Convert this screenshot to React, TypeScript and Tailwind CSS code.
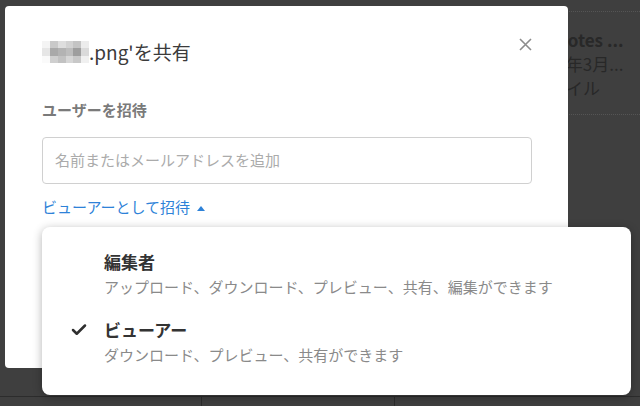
import { Check } from 'lucide-react';

const mosaic = [
  ['#f4f4f4', '#c9c9c9', '#dedede', '#d2d2d2', '#c4c4c4', '#ececec'],
  ['#e6e6e6', '#a9a9a9', '#b3b3b3', '#bdbdbd', '#9e9e9e', '#dadada'],
  ['#fafafa', '#cfcfcf', '#c2c2c2', '#d6d6d6', '#c8c8c8', '#f0f0f0'],
];

const roles = [
  { name: '編集者', desc: 'アップロード、ダウンロード、プレビュー、共有、編集ができます', checked: false },
  { name: 'ビューアー', desc: 'ダウンロード、プレビュー、共有ができます', checked: true },
];

export default function App() {
  return (
    <div
      className="relative w-[640px] h-[406px] overflow-hidden bg-[#3f3f3f]"
      style={{ fontFamily: '"Noto Sans CJK JP", "Noto Sans", sans-serif' }}
    >
      {/* Dimmed page behind the dialog */}
      <div className="flex justify-end h-full">
        <div className="w-[88px] flex flex-col">
          <div className="mt-[11px] border-t border-dotted border-[#555]" />
          <div className="pt-[16px] text-[#282828] leading-[24px]">
            <div className="ml-[3px] text-[17px] font-bold whitespace-nowrap">Notes ...</div>
            <div className="-ml-[24px] text-[17px] whitespace-nowrap">2018年3月...</div>
            <div className="-ml-[20px] text-[17px] whitespace-nowrap">ファイル</div>
          </div>
          <div className="mt-[14px] border-t border-dotted border-[#555]" />
        </div>
      </div>
      <div className="absolute left-0 right-0 top-[396px] h-[10px] border-t border-[#2c2c2c] flex">
        <div className="w-[202px] border-r border-[#2c2c2c]" />
        <div className="w-[193px] border-r border-[#2c2c2c]" />
      </div>

      {/* Dialog */}
      <div className="absolute left-[5px] top-[6px] w-[563px] h-[362px] bg-white rounded-[4px] pl-[37px] pr-[37px]">
        <div className="flex items-center justify-between pt-[35px]">
          <div className="flex items-center">
            <div className="grid grid-cols-6 w-[47px] h-[22px]">
              {mosaic.flat().map((c, i) => (
                <div key={i} style={{ backgroundColor: c }} />
              ))}
            </div>
            <span className="text-[19px] leading-[22px] text-[#3b3b3b]">.png'を共有</span>
          </div>
          <svg width="13" height="13" viewBox="0 0 13 13" className="mr-[-1px] -mt-[16px]">
            <path d="M1 1L12 12M12 1L1 12" stroke="#8c8c8c" strokeWidth="1.6" />
          </svg>
        </div>

        <div className="mt-[36px] text-[15px] font-bold text-[#7a7a7a] leading-[22px]">ユーザーを招待</div>

        <div className="mt-[16px] h-[47px] w-[490px] border border-[#d0d0d0] rounded-[4px] flex items-center px-[12px]">
          <span className="text-[15px] text-[#ababab]">名前またはメールアドレスを追加</span>
        </div>

        <div className="mt-[12px] flex items-center gap-[7px] text-[15px] text-[#2e82d8] leading-[22px]">
          <span>ビューアーとして招待</span>
          <svg width="8" height="5" viewBox="0 0 8 5" className="mt-[2px]">
            <path d="M4 0L8 5H0Z" fill="#2e82d8" />
          </svg>
        </div>
      </div>

      {/* Role menu */}
      <div className="absolute left-[42px] top-[227px] w-[589px] h-[168px] bg-white rounded-[8px] shadow-[0_2px_10px_rgba(0,0,0,0.3)] pt-[22px]">
        <div className="flex flex-col gap-[18px]">
          {roles.map((r) => (
            <div key={r.name} className="flex">
              <div className="w-[62px] flex justify-end pr-[16px] pt-[4px]">
                {r.checked && <Check size={18} strokeWidth={3.4} color="#2f2f2f" />}
              </div>
              <div className="flex flex-col">
                <div className="text-[17px] font-bold text-[#333] leading-[26px]">{r.name}</div>
                <div className="text-[15px] text-[#8a8a8a] leading-[24px]">{r.desc}</div>
              </div>
            </div>
          ))}
        </div>
      </div>
    </div>
  );
}
